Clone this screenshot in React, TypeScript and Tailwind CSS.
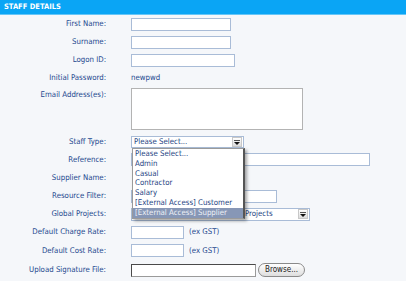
import React from "react";

const LABEL = "text-[#23478e]";

function Row({
  h,
  label,
  children,
  top = false,
  labelPt = "",
}: {
  h: string;
  label: string;
  children?: React.ReactNode;
  top?: boolean;
  labelPt?: string;
}) {
  return (
    <div className={`flex ${h} ${top ? "items-start" : "items-center"}`}>
      <div className={`w-[106px] shrink-0 text-right ${LABEL} ${labelPt}`}>{label}</div>
      <div className="ml-[25px] flex items-center">{children}</div>
    </div>
  );
}

function Input({ w }: { w: string }) {
  return <div className={`${w} h-[13px] bg-white border border-[#a9bcd7]`} />;
}

function Arrow() {
  return (
    <div className="w-[10px] h-[10px] mr-[1px] flex items-center justify-center bg-gradient-to-b from-[#ffffff] to-[#dcdcdc] border border-[#c8c8c8]">
      <svg width="6" height="5" viewBox="0 0 6 5">
        <rect x="0" y="0" width="6" height="1" fill="#555" />
        <polygon points="0,2 6,2 3,5" fill="#111" />
      </svg>
    </div>
  );
}

export default function App() {
  const items = [
    "Please Select...",
    "Admin",
    "Casual",
    "Contractor",
    "Salary",
    "[External Access] Customer",
    "[External Access] Supplier",
  ];
  return (
    <div className="relative w-[406px] h-[281px] overflow-hidden bg-[#f5f7fa] font-['DejaVu_Sans_Condensed','DejaVu_Sans',sans-serif] text-[7.8px]">
      <div className="h-[14px] bg-[#0aa5f5] text-white font-bold text-[7.5px] pl-[4px] flex items-center">
        STAFF DETAILS
      </div>
      <div className="h-[1px] bg-[#66c6f7]" />

      <Row h="h-[18px]" label="First Name:">
        <Input w="w-[100px]" />
      </Row>
      <Row h="h-[18px]" label="Surname:">
        <Input w="w-[100px]" />
      </Row>
      <Row h="h-[18px]" label="Logon ID:">
        <Input w="w-[104px]" />
      </Row>
      <Row h="h-[17px]" label="Initial Password:">
        <span className={LABEL}>newpwd</span>
      </Row>
      <Row h="h-[48px]" label="Email Address(es):" top labelPt="pt-[3px]">
        <div className="mt-[2px] w-[172px] h-[42px] bg-white border border-[#b3b3b3]" />
      </Row>
      <Row h="h-[16px]" label="Staff Type:">
        <div className="w-[113px] h-[12px] bg-white border border-[#a9bcd7] flex items-center justify-between">
          <span className="pl-[2px] text-[7.8px] text-[#1d3f82] leading-none">Please Select...</span>
          <Arrow />
        </div>
      </Row>
      <Row h="h-[19px]" label="Reference:">
        <Input w="w-[239px]" />
      </Row>
      <Row h="h-[18px]" label="Supplier Name:" />
      <Row h="h-[18px]" label="Resource Filter:">
        <Input w="w-[146px]" />
      </Row>
      <Row h="h-[18px]" label="Global Projects:">
        <div className="w-[179px] h-[13px] bg-white border border-[#a9bcd7] flex items-center justify-between">
          <span className="pl-[113px] text-[7.8px] text-[#1d3f82] leading-none whitespace-nowrap">
            Projects
          </span>
          <Arrow />
        </div>
      </Row>
      <Row h="h-[18px]" label="Default Charge Rate:">
        <Input w="w-[53px]" />
        <span className={`ml-[5px] ${LABEL}`}>(ex GST)</span>
      </Row>
      <Row h="h-[19px]" label="Default Cost Rate:">
        <Input w="w-[53px]" />
        <span className={`ml-[5px] ${LABEL}`}>(ex GST)</span>
      </Row>
      <Row h="h-[20px]" label="Upload Signature File:">
        <div className="w-[125px] h-[13px] bg-white border border-[#9a9a9a] border-t-[#4a4a4a] border-l-[#4a4a4a]" />
        <div className="ml-[2px] w-[47px] h-[14px] rounded-full border border-[#8a8a8a] bg-gradient-to-b from-[#ffffff] to-[#dedede] flex items-center justify-center text-[8px] text-[#222] leading-none">
          Browse...
        </div>
      </Row>

      <div className="absolute left-[132px] top-[148px] w-[113px] h-[71px] bg-white border border-[#9a9a9a] border-r-[2px] border-r-[#555] shadow-[2px_2px_3px_rgba(0,0,0,0.35)]">
        {items.map((t, i) => (
          <div
            key={t}
            className={`h-[9.8px] leading-[9.8px] pl-[2px] text-[7.8px] whitespace-nowrap ${
              i === items.length - 1 ? "bg-[#8797b6] text-[#eef1f7]" : "text-[#1d3f82]"
            }`}
          >
            {t}
          </div>
        ))}
      </div>
    </div>
  );
}
